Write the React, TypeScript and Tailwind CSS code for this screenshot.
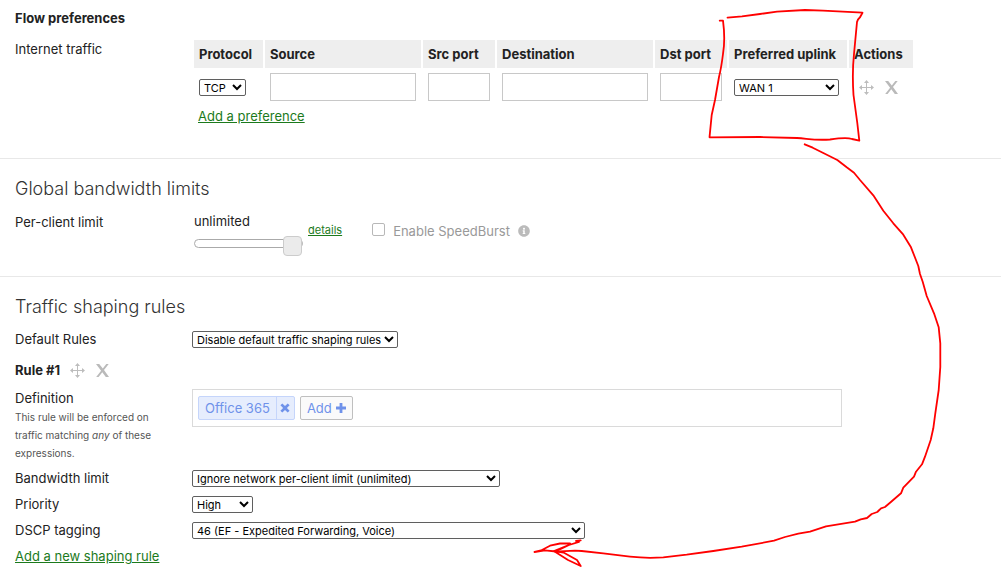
import { FaInfoCircle } from "react-icons/fa";

const selectClass =
  "block h-[17px] rounded-xs border border-[#5f5f5f] bg-white text-[11px] leading-3 text-black";
const inputClass = "block h-7 border border-[#c8c8c8] bg-white px-1";
const thClass = "bg-[#eeeeee] p-[5px] text-left font-bold";
const tdClass = "px-[5px] py-[3px] align-middle";
const linkClass = "text-[#1c7a1c] underline";
const headingClass = "text-lg leading-7 font-light text-[#333333]";

function MoveIcon() {
  return (
    <svg width="15" height="15" viewBox="0 0 15 15" fill="#bdbdbd">
      <path d="M7 2h1v5h5v1H8v5H7V8H2V7h5z" />
      <path d="M7.5 0 10 3H5zM7.5 15 10 12H5zM0 7.5 3 5v5zM15 7.5 12 5v5z" />
    </svg>
  );
}

function RemoveIcon() {
  return (
    <svg width="13" height="13" viewBox="0 0 13 13" fill="#bababa">
      <path d="M0 0h3.2l3.6 4.6L10.3 0h2.4L8 6l5 7H9.8L6.3 8.3 2.6 13H.2l4.9-6.3z" />
    </svg>
  );
}

function RowActions() {
  return (
    <div className="flex items-center gap-[11px]">
      <button type="button" aria-label="Move">
        <MoveIcon />
      </button>
      <button type="button" aria-label="Remove">
        <RemoveIcon />
      </button>
    </div>
  );
}

function FlowPreferences() {
  return (
    <section className="border-b border-[#e8e8e8] px-[15px] pt-2 pb-8">
      <h3 className="font-bold">Flow preferences</h3>
      <div className="mt-2.5 grid grid-cols-[177px_1fr]">
        <p className="pt-px">Internet traffic</p>
        <div>
          <table className="border-separate border-spacing-[2px] leading-[18px]">
            <thead>
              <tr>
                <th className={`${thClass} w-[69px]`}>Protocol</th>
                <th className={thClass}>Source</th>
                <th className={thClass}>Src port</th>
                <th className={thClass}>Destination</th>
                <th className={thClass}>Dst port</th>
                <th className={`${thClass} w-[118px] whitespace-nowrap`}>Preferred uplink</th>
                <th className={`${thClass} w-16`}>Actions</th>
              </tr>
            </thead>
            <tbody>
              <tr>
                <td className={tdClass}>
                  <select aria-label="Protocol" className={`${selectClass} w-[47px]`}>
                    <option>TCP</option>
                  </select>
                </td>
                <td className={tdClass}>
                  <input type="text" aria-label="Source" className={`${inputClass} w-[146px]`} />
                </td>
                <td className={tdClass}>
                  <input type="text" aria-label="Src port" className={`${inputClass} w-[62px]`} />
                </td>
                <td className={tdClass}>
                  <input type="text" aria-label="Destination" className={`${inputClass} w-[146px]`} />
                </td>
                <td className={tdClass}>
                  <input type="text" aria-label="Dst port" className={`${inputClass} w-[62px]`} />
                </td>
                <td className={tdClass}>
                  <select aria-label="Preferred uplink" className={`${selectClass} w-[105px]`}>
                    <option>WAN 1</option>
                  </select>
                </td>
                <td className="pl-2.5 align-middle">
                  <RowActions />
                </td>
              </tr>
            </tbody>
          </table>
          <a href="#" className={`${linkClass} ml-1.5 block w-fit`}>
            Add a preference
          </a>
        </div>
      </div>
    </section>
  );
}

function BandwidthLimits() {
  return (
    <section className="border-b border-[#e8e8e8] px-[15px] pt-4 pb-[23px]">
      <h2 className={headingClass}>Global bandwidth limits</h2>
      <div className="mt-2 grid grid-cols-[177px_1fr]">
        <label htmlFor="client-limit" className="pt-px">
          Per-client limit
        </label>
        <div className="flex items-start pl-0.5">
          <div className="w-[109px]">
            <p>unlimited</p>
            <input
              id="client-limit"
              type="range"
              defaultValue={100}
              className="mt-0.5 block h-5 w-full appearance-none bg-transparent [&::-webkit-slider-runnable-track]:h-[9px] [&::-webkit-slider-runnable-track]:rounded-full [&::-webkit-slider-runnable-track]:border [&::-webkit-slider-runnable-track]:border-[#aaaaaa] [&::-webkit-slider-thumb]:-mt-1 [&::-webkit-slider-thumb]:h-5 [&::-webkit-slider-thumb]:w-[19px] [&::-webkit-slider-thumb]:appearance-none [&::-webkit-slider-thumb]:rounded [&::-webkit-slider-thumb]:border [&::-webkit-slider-thumb]:border-[#cccccc] [&::-webkit-slider-thumb]:bg-[#ebebeb]"
            />
          </div>
          <a href="#" className={`${linkClass} ml-[5px] pt-[9px] text-[11px]`}>
            details
          </a>
          <div className="ml-[30px] flex items-center gap-2 pt-2.5 text-[#999999]">
            <input
              id="speedburst"
              type="checkbox"
              className="mb-1 size-[13px] appearance-none rounded-xs border border-[#b8b8b8] bg-white"
            />
            <label htmlFor="speedburst">Enable SpeedBurst</label>
            <FaInfoCircle className="size-3 text-[#bbbbbb]" />
          </div>
        </div>
      </div>
    </section>
  );
}

function ShapingRules() {
  return (
    <section className="px-[15px] pt-4">
      <h2 className={headingClass}>Traffic shaping rules</h2>
      <div className="mt-2 grid grid-cols-[177px_1fr] items-center">
        <label htmlFor="default-rules">Default Rules</label>
        <select id="default-rules" className={`${selectClass} w-[206px]`}>
          <option>Disable default traffic shaping rules</option>
        </select>
      </div>
      <div className="mt-[11px] flex items-center gap-2.5">
        <h3 className="font-bold">Rule #1</h3>
        <RowActions />
      </div>
      <div className="mt-2 grid grid-cols-[177px_1fr] items-start">
        <div>
          <p>Definition</p>
          <p className="text-[10px] leading-[18px] text-[#555555]">
            This rule will be enforced on
            <br />
            traffic matching <em>any</em> of these
            <br />
            expressions.
          </p>
        </div>
        <div className="mt-px flex max-w-[650px] gap-[5px] border border-[#dadada] p-[5px] pb-1.5">
          <div className="mt-px flex h-6 rounded-xs border border-[#c5d5fb] bg-[#e6edfd] text-[#6f92ea]">
            <span className="px-1.5 leading-[22px]">Office 365</span>
            <button
              type="button"
              aria-label="Remove Office 365"
              className="flex w-[18px] items-center justify-center border-l border-[#c5d5fb]"
            >
              <svg width="10" height="10" viewBox="0 0 10 10" fill="currentColor">
                <path d="M2.3.4 5 3.1 7.7.4 9.6 2.3 6.9 5l2.7 2.7-1.9 1.9L5 6.9 2.3 9.6.4 7.7 3.1 5 .4 2.3z" />
              </svg>
            </button>
          </div>
          <button
            type="button"
            className="mt-px flex h-6 items-center gap-1 rounded-xs border border-[#bfbfbf] bg-[#fafafa] px-1.5 text-[#6f92ea]"
          >
            Add
            <svg width="10" height="10" viewBox="0 0 10 10" fill="currentColor">
              <path d="M3.6 0h2.8v3.6H10v2.8H6.4V10H3.6V6.4H0V3.6h3.6z" />
            </svg>
          </button>
        </div>
      </div>
      <div className="mt-1.5 grid grid-cols-[177px_1fr] items-center gap-y-1.5">
        <label htmlFor="bandwidth">Bandwidth limit</label>
        <select id="bandwidth" className={`${selectClass} w-[308px]`}>
          <option>Ignore network per-client limit (unlimited)</option>
        </select>
        <label htmlFor="priority">Priority</label>
        <select id="priority" className={`${selectClass} w-[61px]`}>
          <option>High</option>
        </select>
        <label htmlFor="dscp">DSCP tagging</label>
        <select id="dscp" className={`${selectClass} w-[393px]`}>
          <option>46 (EF - Expedited Forwarding, Voice)</option>
        </select>
      </div>
      <a href="#" className={`${linkClass} mt-1.5 block w-fit`}>
        Add a new shaping rule
      </a>
    </section>
  );
}

// hand-drawn pen marks that lie over the form
function Annotation() {
  return (
    <svg
      className="pointer-events-none absolute top-0 left-0"
      width="1001"
      height="580"
      viewBox="0 0 1001 580"
      fill="none"
      stroke="#ff0000"
      strokeWidth="1.8"
      strokeLinecap="round"
      strokeLinejoin="round"
    >
      <path d="M719.7 20.7H723C724.5 32 724.5 45 723 54C722 62 720 73 719 77L715 100L711.7 115L709.5 137.3L760 137L797 138C810 139 815 140.5 830 139.5C840 138 848 137.5 852 139L859.3 140.7L857.3 123L853.5 95C852.5 80 852.5 68 854 54L857 22Q857.5 19.5 860 17.3L862.5 12.7L823 10.7L805 10L777 11.7L760 14L742 16.3L727.5 17.7" />
      <path d="M804.7 144.3L812.7 147.7L823.3 153L837.3 160L846.7 167.3L854 172.7L860 180L873.3 195.3L883.3 210.7L893.3 223.3L903.3 234.7L911 247.3L918.3 266L920 274L922.7 281.7L926.7 296L934 313.3L938.7 327.3L940.3 343.3V367L938.7 390L935.3 413.3L933.3 428.3L930.7 440L925 456.7L922 464.3L916 471.7L914 476.7L903.3 487.7L901 493.3L890 502.7L885 507L881 508.3L877.3 512L871.7 514L867 518L860.7 519.3L855 521.7L826 526.3L810 531.7L798.3 533.7L785 537L774 540.7L741.7 546.7L713.3 551L686.7 554.7L663.3 557.3Q647 558.5 630 556.7L603.3 553.3L581.7 551L575 550.7L555 551.7" />
      <path d="M580.7 540.3L576 541L579 541.8L569 545L555 551.7L568 560L580.7 566L577 560L563.5 552.5L554 551L570 544.5V543.3L560 543.5L550 545.7L541 550.5L534.5 552L545 550.3L556 551.5" />
    </svg>
  );
}

export default function App() {
  return (
    <main className="relative overflow-hidden bg-white pb-3 font-[Inter,'Liberation_Sans',sans-serif] text-[13px] leading-5 text-[#222222]">
      <FlowPreferences />
      <BandwidthLimits />
      <ShapingRules />
      <Annotation />
    </main>
  );
}
